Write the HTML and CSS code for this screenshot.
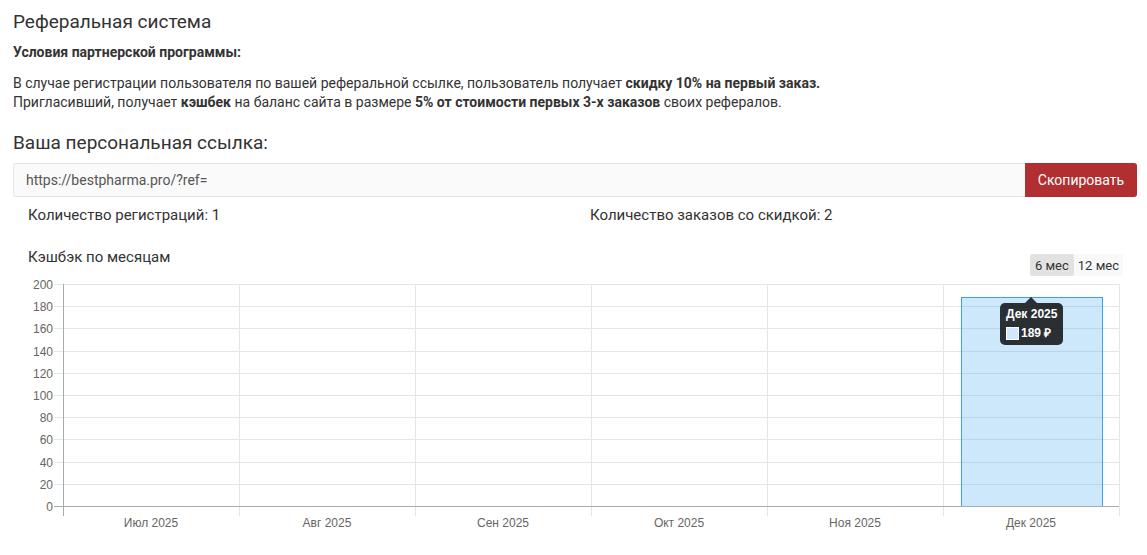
FILE: index.html
```html
<!DOCTYPE html>
<html lang="ru">
<head>
    <meta charset="UTF-8">
    <title>Реферальная система</title>
    <link rel="stylesheet" href="styles.css">
</head>
<body>
<div class="page">
    <h1 class="page-title">Реферальная система</h1>
    <p class="terms-title">Условия партнерской программы:</p>
    <p class="terms">
        В случае регистрации пользователя по вашей реферальной ссылке, пользователь получает <b>скидку 10% на первый заказ.</b><br>
        Пригласивший, получает <b>кэшбек</b> на баланс сайта в размере <b>5% от стоимости первых 3-х заказов</b> своих рефералов.
    </p>

    <h2 class="link-title">Ваша персональная ссылка:</h2>
    <div class="link-group">
        <input class="link-input" type="text" value="https://bestpharma.pro/?ref=" readonly>
        <button class="copy-btn">Скопировать</button>
    </div>

    <div class="stats">
        <div class="stat">Количество регистраций: 1</div>
        <div class="stat">Количество заказов со скидкой: 2</div>
    </div>

    <div class="chart-box">
        <div class="chart-head">
            <div class="chart-title">Кэшбэк по месяцам</div>
            <div class="period">
                <button class="period-btn active">6 мес</button>
                <button class="period-btn narrow">12 мес</button>
            </div>
        </div>
        <div class="chart-wrap">
            <svg class="chart" width="1094" height="262" viewBox="0 -4 1094 262">
                <!-- horizontal grid -->
                <g stroke="#e5e5e5" stroke-width="1">
                    <line x1="26" y1="4.5" x2="1091" y2="4.5"/>
                    <line x1="26" y1="26.5" x2="1091" y2="26.5"/>
                    <line x1="26" y1="48.5" x2="1091" y2="48.5"/>
                    <line x1="26" y1="71.5" x2="1091" y2="71.5"/>
                    <line x1="26" y1="93.5" x2="1091" y2="93.5"/>
                    <line x1="26" y1="115.5" x2="1091" y2="115.5"/>
                    <line x1="26" y1="137.5" x2="1091" y2="137.5"/>
                    <line x1="26" y1="159.5" x2="1091" y2="159.5"/>
                    <line x1="26" y1="182.5" x2="1091" y2="182.5"/>
                    <line x1="26" y1="204.5" x2="1091" y2="204.5"/>
                </g>
                <!-- vertical grid -->
                <g stroke="#e5e5e5" stroke-width="1">
                    <line x1="211.5" y1="4" x2="211.5" y2="236"/>
                    <line x1="387.5" y1="4" x2="387.5" y2="236"/>
                    <line x1="563.5" y1="4" x2="563.5" y2="236"/>
                    <line x1="739.5" y1="4" x2="739.5" y2="236"/>
                    <line x1="915.5" y1="4" x2="915.5" y2="236"/>
                    <line x1="1091.5" y1="4" x2="1091.5" y2="236"/>
                </g>
                <!-- bar -->
                <rect x="933.5" y="17.5" width="141" height="209" fill="rgba(54,162,235,0.25)" stroke="#36a2eb" stroke-width="1"/>
                <!-- axes -->
                <g stroke="#aaaaaa" stroke-width="1">
                    <line x1="35.5" y1="4" x2="35.5" y2="236"/>
                    <line x1="26" y1="226.5" x2="1091" y2="226.5"/>
                </g>
                <g class="y-labels" text-anchor="end">
                    <text x="25" y="8.5">200</text>
                    <text x="25" y="30.5">180</text>
                    <text x="25" y="52.5">160</text>
                    <text x="25" y="75.5">140</text>
                    <text x="25" y="97.5">120</text>
                    <text x="25" y="119.5">100</text>
                    <text x="25" y="141.5">80</text>
                    <text x="25" y="163.5">60</text>
                    <text x="25" y="186.5">40</text>
                    <text x="25" y="208.5">20</text>
                    <text x="25" y="230.5">0</text>
                </g>
                <g class="x-labels" text-anchor="middle">
                    <text x="123" y="247">Июл 2025</text>
                    <text x="299" y="247">Авг 2025</text>
                    <text x="475" y="247">Сен 2025</text>
                    <text x="651" y="247">Окт 2025</text>
                    <text x="827" y="247">Ноя 2025</text>
                    <text x="1003" y="247">Дек 2025</text>
                </g>
            </svg>
            <div class="tooltip">
                <div class="tooltip-title">Дек 2025</div>
                <div class="tooltip-row"><span class="swatch"></span>189 ₽</div>
            </div>
        </div>
    </div>
</div>
</body>
</html>
```

FILE: styles.css
```css
/* Base */
body {
    margin: 0;
    font-family: Roboto, "Liberation Sans", Arial, sans-serif;
    color: #333;
    background: #fff;
}

.page {
    padding: 0 10px 0 13px;
}

.page-title {
    margin: 11px 0 0;
    font-size: 19px;
    font-weight: 400;
    line-height: 22px;
}

.terms-title {
    margin: 10px 0 0;
    font-size: 14px;
    font-weight: 700;
    line-height: 19px;
}

.terms {
    margin: 12px 0 0;
    font-size: 14px;
    line-height: 19px;
}

.terms b {
    font-weight: 700;
}

.link-title {
    margin: 20px 0 0;
    font-size: 19px;
    font-weight: 400;
    line-height: 22px;
}

/* Link + copy button */
.link-group {
    display: flex;
    margin-top: 9px;
    height: 34px;
}

.link-input {
    flex: 1;
    box-sizing: border-box;
    height: 34px;
    padding: 0 12px;
    border: 1px solid #e6e6e6;
    border-right: none;
    border-radius: 3px 0 0 3px;
    background: #fafafa;
    font-family: Roboto, "Liberation Sans", Arial, sans-serif;
    font-size: 14px;
    color: #555;
    outline: none;
}

.copy-btn {
    width: 112px;
    height: 34px;
    border: none;
    border-radius: 0 3px 3px 0;
    background: #b12f30;
    color: #fff;
    font-family: Roboto, "Liberation Sans", Arial, sans-serif;
    font-size: 14px;
    cursor: pointer;
}

/* Stats */
.stats {
    display: flex;
    margin-top: 8px;
}

.stat {
    flex: 1;
    padding: 0 15px;
    font-size: 15px;
    line-height: 20px;
}

/* Chart */
.chart-box {
    padding: 0 15px;
    margin-top: 22px;
}

.chart-head {
    display: flex;
    justify-content: space-between;
    align-items: flex-start;
}

.chart-title {
    font-size: 15px;
    line-height: 20px;
}

.period {
    display: flex;
    margin-top: 7px;
    margin-right: -1px;
}

.period-btn {
    height: 22px;
    padding: 0 5px;
    border: none;
    background: #f9f9f9;
    color: #333;
    font-family: Roboto, "Liberation Sans", Arial, sans-serif;
    font-size: 13px;
    cursor: pointer;
}

.period-btn.narrow {
    padding: 0 4px;
}

.period-btn.active {
    background: #e2e2e2;
    border-radius: 2px;
}

.chart-wrap {
    position: relative;
}

.chart {
    display: block;
}

.chart text {
    font-family: "Liberation Sans", Arial, sans-serif;
    font-size: 12px;
    fill: #666;
}

.tooltip {
    position: absolute;
    left: 972px;
    top: 27px;
    width: 63px;
    height: 42px;
    box-sizing: border-box;
    padding: 3px 6px;
    border-radius: 5px;
    background: rgba(0, 0, 0, 0.8);
    color: #fff;
    font-family: "Liberation Sans", Arial, sans-serif;
    font-size: 12px;
    font-weight: 700;
    line-height: 17px;
    white-space: nowrap;
}

.tooltip::before {
    content: "";
    position: absolute;
    left: 25px;
    top: -6px;
    border: 6px solid transparent;
    border-top: none;
    border-bottom-color: rgba(0, 0, 0, 0.8);
}

.tooltip-title {
    margin-bottom: 2px;
}

.tooltip-row {
    display: flex;
    align-items: center;
}

.swatch {
    box-sizing: border-box;
    width: 13px;
    height: 13px;
    margin-right: 2px;
    border: 1px solid #fff;
    background: #cfe8fb;
}
```
